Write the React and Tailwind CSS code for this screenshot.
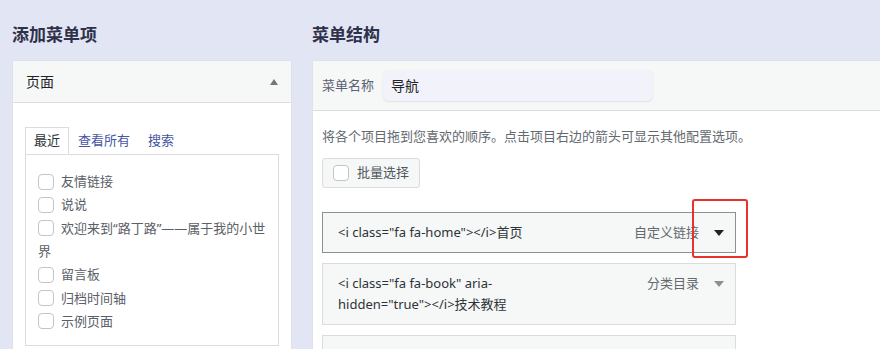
import React from 'react'

const pages = ['友情链接', '说说', '欢迎来到“路丁路”——属于我的小世界', '留言板', '归档时间轴', '示例页面']

function Box({ className = '' }) {
  return (
    <span
      className={`inline-block h-4 w-4 shrink-0 rounded-[4px] border border-[#c3c4c7] bg-white align-middle ${className}`}
    />
  )
}

function Caret({ color = '#1d2327' }) {
  return (
    <svg width="10" height="6" viewBox="0 0 10 6" className="shrink-0">
      <path d="M0 0h10L5 6z" fill={color} />
    </svg>
  )
}

function MenuItem({ title, type, active }) {
  return (
    <div
      className={`flex w-[414px] items-start justify-between border bg-[#f6f7f7] py-[9px] pl-[15px] pr-[11px] text-[13px] leading-[21px] ${
        active ? 'border-[#8c8f94]' : 'border-[#dcdcde]'
      }`}
    >
      <span className="max-w-[230px] text-[#2c3338]">{title}</span>
      <span className="flex h-[21px] items-center gap-[15px] text-[#646970]">
        {type}
        <Caret color={active ? '#1d2327' : '#8c8f94'} />
      </span>
    </div>
  )
}

export default function App() {
  return (
    <div className="flex h-[349px] w-[880px] gap-5 overflow-hidden bg-[#e2e5f4] pl-3 font-['Noto_Sans','Noto_Sans_CJK_SC',sans-serif]">
      {/* left column */}
      <div className="w-[280px] shrink-0">
        <h2 className="h-[60px] pt-[24px] text-[17px] font-bold leading-[22px] text-[#2f3049]">添加菜单项</h2>
        <div className="border border-[#dfe1ec] bg-white">
          <div className="flex h-[42px] items-center justify-between border-b border-[#dcdcde] bg-[#f6f7f7] pl-[13px] pr-[13px]">
            <span className="text-[14px] text-[#1d2327]">页面</span>
            <svg width="8" height="6" viewBox="0 0 8 6">
              <path d="M0 6h8L4 0z" fill="#72777c" />
            </svg>
          </div>
          <div className="px-3 pb-4 pt-[24px]">
            <div className="flex text-[13px] leading-[23px]">
              <span className="border border-b-0 border-[#dcdcde] bg-white px-2 py-px text-[#2c3338]">最近</span>
              <span className="border border-transparent px-2 py-px text-[#4554a4]">查看所有</span>
              <span className="border border-transparent px-2 py-px text-[#4554a4]">搜索</span>
            </div>
            <ul className="border border-[#dcdcde] px-3 pb-[12px] pt-[15px] text-[13px] leading-[23.33px] text-[#5a6067]">
              {pages.map((p) => (
                <li key={p}>
                  <Box className="mr-[7px] -mt-[2px]" />
                  {p}
                </li>
              ))}
            </ul>
          </div>
        </div>
      </div>

      {/* right column */}
      <div className="w-[620px] shrink-0">
        <h2 className="h-[60px] pt-[24px] text-[17px] font-bold leading-[22px] text-[#2f3049]">菜单结构</h2>
        <div className="border border-[#dfe1ec] bg-white">
          <div className="flex h-[50px] items-center gap-[9px] border-b border-[#dcdcde] bg-[#f6f7f7] pl-[9px]">
            <span className="text-[13px] text-[#5b6275]">菜单名称</span>
            <div className="flex h-[31px] w-[270px] items-center rounded-md bg-[#f2f3fa] px-2 text-[14px] text-[#1d2327] shadow-[0_1px_2px_rgba(60,64,100,0.12)]">
              导航
            </div>
          </div>
          <div className="pl-[9px] pt-[15px]">
            <p className="text-[13px] leading-[20px] text-[#646970]">
              将各个项目拖到您喜欢的顺序。点击项目右边的箭头可显示其他配置选项。
            </p>
            <div className="mt-[12px] inline-flex h-[30px] items-center gap-2 rounded-[3px] border border-[#dcdcde] bg-[#f6f7f7] pl-[10px] pr-[10px] text-[13px] text-[#50575e]">
              <Box />
              批量选择
            </div>
            <div className="relative mt-[24px] flex flex-col gap-[10px]">
              <MenuItem title={'<i class="fa fa-home"></i>首页'} type="自定义链接" active />
              <MenuItem title={'<i class="fa fa-book" aria-hidden="true"></i>技术教程'} type="分类目录" />
              <div className="h-[40px] w-[414px] border border-[#dcdcde] bg-[#f6f7f7]" />
              <div className="absolute left-[370px] top-[-13px] h-[59px] w-[56px] rounded-[3px] border-2 border-[#e8322b]" />
            </div>
          </div>
        </div>
      </div>
    </div>
  )
}
